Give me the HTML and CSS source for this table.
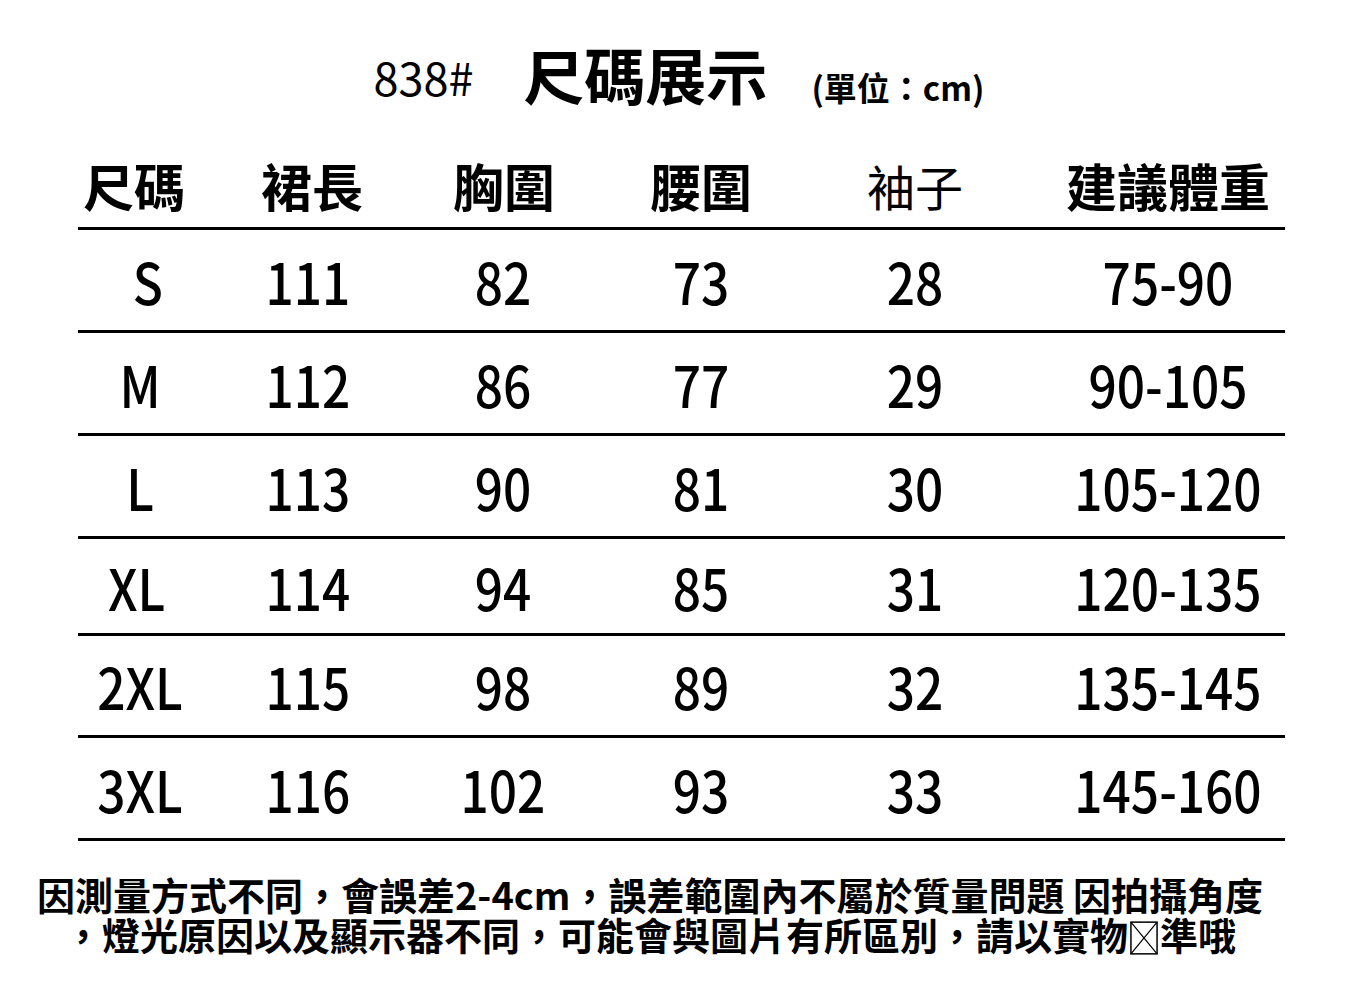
FILE: index.html
```html
<!DOCTYPE html>
<html lang="zh-Hant">
<head>
<meta charset="utf-8">
<title>838# 尺碼展示</title>
<link rel="stylesheet" href="styles.css">
</head>
<body>
<div class="page">
  <div class="title-row">
    <span class="code">838#</span>
    <span class="title">尺碼展示</span>
    <span class="unit">(單位：cm)</span>
  </div>

  <div class="table">
    <div class="row head">
      <div class="cell">尺碼</div>
      <div class="cell">裙長</div>
      <div class="cell">胸圍</div>
      <div class="cell">腰圍</div>
      <div class="cell light">袖子</div>
      <div class="cell last">建議體重</div>
    </div>
    <div class="row">
      <div class="cell size s">S</div>
      <div class="cell">111</div>
      <div class="cell">82</div>
      <div class="cell">73</div>
      <div class="cell">28</div>
      <div class="cell last">75-90</div>
    </div>
    <div class="row">
      <div class="cell size">M</div>
      <div class="cell">112</div>
      <div class="cell">86</div>
      <div class="cell">77</div>
      <div class="cell">29</div>
      <div class="cell last">90-105</div>
    </div>
    <div class="row">
      <div class="cell size">L</div>
      <div class="cell">113</div>
      <div class="cell">90</div>
      <div class="cell">81</div>
      <div class="cell">30</div>
      <div class="cell last">105-120</div>
    </div>
    <div class="row short">
      <div class="cell size xl">XL</div>
      <div class="cell">114</div>
      <div class="cell">94</div>
      <div class="cell">85</div>
      <div class="cell">31</div>
      <div class="cell last">120-135</div>
    </div>
    <div class="row mid">
      <div class="cell size">2XL</div>
      <div class="cell">115</div>
      <div class="cell">98</div>
      <div class="cell">89</div>
      <div class="cell">32</div>
      <div class="cell last">135-145</div>
    </div>
    <div class="row">
      <div class="cell size">3XL</div>
      <div class="cell">116</div>
      <div class="cell">102</div>
      <div class="cell">93</div>
      <div class="cell">33</div>
      <div class="cell last">145-160</div>
    </div>
  </div>

  <div class="note">
    <div class="note-line">因測量方式不同，會誤差2-4cm，誤差範圍內不屬於質量問題 因拍攝角度</div>
    <div class="note-line">，燈光原因以及顯示器不同，可能會與圖片有所區別，請以實物<svg class="tofu" viewBox="0 0 30 36" aria-hidden="true"><rect x="1" y="1" width="28" height="34" fill="none" stroke="#000" stroke-width="1.6"/><path d="M1 1 L29 35 M29 1 L1 35" stroke="#000" stroke-width="1.3"/></svg>準哦</div>
  </div>
</div>
</body>
</html>
```

FILE: styles.css
```css
html, body {
  margin: 0;
  padding: 0;
  background: #ffffff;
}

body {
  font-family: "Noto Sans CJK TC", "Noto Sans CJK SC", sans-serif;
  color: #000;
}

.page {
  width: 1350px;
  height: 1000px;
  overflow: hidden;
}

.title-row {
  display: flex;
  justify-content: center;
  align-items: flex-start;
  height: 130px;
  padding-left: 8px;
  box-sizing: border-box;
}

.code {
  font-size: 45px;
  line-height: 1;
  font-weight: 400;
  margin-top: 54px;
  margin-right: 50px;
}

.title {
  font-size: 61px;
  line-height: 1;
  font-weight: 700;
  margin-top: 43px;
  margin-right: 44px;
}

.unit {
  font-size: 33px;
  line-height: 1;
  font-weight: 700;
  margin-top: 71px;
}

.table {
  margin-left: 78px;
  width: 1207px;
}

.row {
  display: grid;
  grid-template-columns: 124px 212px 178px 218px 210px 265px;
  height: 100px;
  border-bottom: 3px solid #000;
  align-items: center;
}

.row.short { height: 94px; }
.row.mid { height: 99px; }

.row.head {
  height: 100px;
  box-sizing: border-box;
  padding-top: 30px;
  align-items: start;
}

.cell {
  text-align: center;
  font-size: 57px;
  line-height: 1;
  font-weight: 500;
  white-space: nowrap;
}

.row:not(.head) .cell {
  transform: scaleX(0.87);
}

.cell.last {
  padding-left: 31px;
}

.row:not(.head) .cell.last {
  transform-origin: 148px 50%;
}

.head .cell {
  font-size: 51px;
  font-weight: 700;
  line-height: 51px;
}

.head .cell:nth-child(2) { padding-left: 8px; }
.head .cell:nth-child(3) { padding-left: 2px; }

.head .cell:first-child {
  text-align: left;
  padding-left: 5px;
}

.head .cell.light {
  font-size: 48px;
  font-weight: 400;
}

.size.s { padding-left: 18px; }
.size.xl { padding-right: 8px; }

.note {
  margin-top: 33px;
  padding-right: 50px;
  text-align: center;
  font-size: 38px;
  line-height: 40px;
  font-weight: 700;
}

.note-line {
  white-space: nowrap;
}

.tofu {
  width: 28px;
  height: 34px;
  vertical-align: -5px;
  margin: 0 2px;
}
```
